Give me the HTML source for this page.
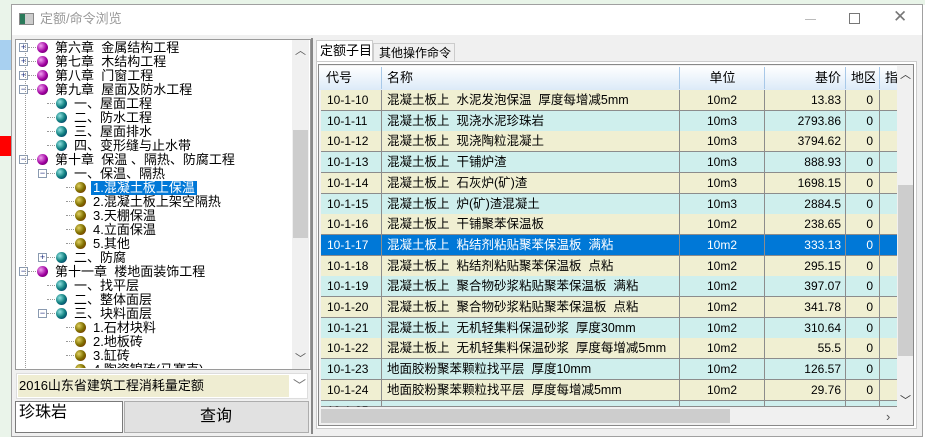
<!DOCTYPE html>
<html><head><meta charset="utf-8"><style>
*{box-sizing:border-box;margin:0;padding:0}
body{width:925px;height:437px;overflow:hidden;background:#fff;font-family:"Liberation Sans","Noto Sans CJK SC",sans-serif;font-size:12px;position:relative}
.a{position:absolute}
.t{position:absolute;white-space:pre;font-size:13px;line-height:14px;color:#000}
.ball{position:absolute;width:11px;height:11px;border-radius:50%}
.p{background:radial-gradient(circle at 35% 35%,#f0a0f0,#a000a0 55%,#500050)}
.g{background:radial-gradient(circle at 35% 35%,#90e0e0,#108080 50%,#002060)}
.o{background:radial-gradient(circle at 35% 35%,#e0d060,#807000 50%,#702000)}
.ex{position:absolute;width:9px;height:9px;border:1px solid #8a9ab0;background:#fff;font-size:9px;line-height:7px;text-align:center;color:#203080}
.row{position:absolute;left:321px;width:576px;height:21px;border-bottom:1px solid #8c8c8c;font-size:12px;line-height:20px}
.row div{position:absolute;top:0;height:20px;border-right:1px solid #8c8c8c;white-space:pre;overflow:hidden}
.y{background:#f0efd2}.c{background:#cfefed}.s{background:#0078d7;color:#fff}
</style></head><body>
<div class="a" style="left:0;top:0;width:925px;height:5px;background:#e8f4e8"></div>
<div class="a" style="left:0;top:0;width:11px;height:437px;background:#eaf4ea"></div>
<div class="a" style="left:0;top:136px;width:11px;height:20px;background:#f00"></div>
<div class="a" style="left:0;top:40px;width:11px;height:30px;background:#a8d0f0"></div>
<div class="a" style="left:11px;top:4px;width:912px;height:433px;background:#f0f0f0;border:1px solid #a0a0a0"></div>
<div class="a" style="left:12px;top:5px;width:910px;height:30px;background:#fff"></div>
<div class="a" style="left:19px;top:13px;width:15px;height:12px;border:1px solid #888;background:linear-gradient(90deg,#2a7a5a 40%,#ccc 40%)"></div>
<div class="t" style="left:40px;top:12px;color:#999;font-size:13px">定额/命令浏览</div>
<div class="a" style="left:805px;top:19px;width:11px;height:1px;background:#bbb"></div>
<div class="a" style="left:849px;top:13px;width:11px;height:11px;border:1px solid #777"></div>
<div class="t" style="left:893px;top:10px;font-size:17px;color:#777">✕</div>
<div class="a" style="left:15px;top:39px;width:296px;height:331px;background:#fff;border:1px solid #9a9a9a;overflow:hidden">
<div class="a" style="left:276px;top:0;width:17px;height:329px;background:#f0f0f0"></div>
<div class="a" style="left:277px;top:90px;width:15px;height:108px;background:#cdcdcd"></div>
<div class="t" style="left:279px;top:4px;font-size:11px;color:#555">︿</div>
<div class="t" style="left:279px;top:312px;font-size:11px;color:#555">﹀</div>
</div>
<div id="tree" class="a" style="left:16px;top:40px;width:275px;height:328px;overflow:hidden"></div>
<div class="a" style="left:16px;top:373px;width:292px;height:26px;background:#fff;border:1px solid #ddd"></div>
<div class="a" style="left:18px;top:375px;width:271px;height:22px;background:#efedd2"></div>
<div class="t" style="left:19px;top:379px;font-size:13px">2016山东省建筑工程消耗量定额</div>
<div class="t" style="left:293px;top:379px;color:#777">﹀</div>
<div class="a" style="left:15px;top:401px;width:108px;height:32px;background:#fff;border:1px solid #7a7a7a"></div>
<div class="t" style="left:19px;top:403px;font-size:16px;line-height:20px">珍珠岩</div>
<div class="a" style="left:124px;top:401px;width:185px;height:32px;background:#e1e1e1;border:1px solid #adadad"></div>
<div class="t" style="left:200px;top:407px;font-size:16px;line-height:20px">查询</div>
<div class="a" style="left:311px;top:38px;width:2px;height:396px;background:#888"></div>
<div class="a" style="left:316px;top:40px;width:57px;height:22px;background:#fff;border:1px solid #ccc;border-bottom:none"></div>
<div class="t" style="left:320px;top:44px">定额子目</div>
<div class="a" style="left:373px;top:43px;width:82px;height:19px;border:1px solid #ccc;border-bottom:none;background:#f0f0f0"></div>
<div class="t" style="left:379px;top:46px;font-size:12px">其他操作命令</div>
<div class="a" style="left:316px;top:61px;width:601px;height:368px;background:#fff;border:1px solid #ccc"></div>
<div class="a" style="left:318px;top:64px;width:596px;height:362px;border:1px solid #888;background:#f0f0f0"></div>
<div class="a" style="left:319px;top:66px;width:578px;height:24px;background:linear-gradient(#fff,#dceaf8)"></div>
<div id="hd"></div>
<div id="rows"></div>
<div class="a" style="left:897px;top:66px;width:16px;height:342px;background:#f0f0f0"></div>
<div class="a" style="left:898px;top:185px;width:15px;height:171px;background:#cdcdcd"></div>
<div class="t" style="left:900px;top:68px;font-size:11px;color:#333">︿</div>
<div class="t" style="left:900px;top:394px;font-size:11px;color:#333">﹀</div>
<div class="a" style="left:321px;top:409px;width:409px;height:14px;background:#cdcdcd"></div>
<div class="t" style="left:886px;top:410px;color:#555">›</div>
<script>
var T=[[0,'+','p','第六章  金属结构工程'],[0,'+','p','第七章  木结构工程'],[0,'+','p','第八章  门窗工程'],[0,'-','p','第九章  屋面及防水工程'],[1,'','g','一、屋面工程'],[1,'','g','二、防水工程'],[1,'','g','三、屋面排水'],[1,'','g','四、变形缝与止水带'],[0,'-','p','第十章  保温 、隔热、防腐工程'],[1,'-','g','一、保温、隔热'],[2,'','o','1.混凝土板上保温'],[2,'','o','2.混凝土板上架空隔热'],[2,'','o','3.天棚保温'],[2,'','o','4.立面保温'],[2,'','o','5.其他'],[1,'+','g','二、防腐'],[0,'-','p','第十一章  楼地面装饰工程'],[1,'','g','一、找平层'],[1,'','g','二、整体面层'],[1,'-','g','三、块料面层'],[2,'','o','1.石材块料'],[2,'','o','2.地板砖'],[2,'','o','3.缸砖'],[2,'','o','4.陶瓷锦砖(马赛克)']];
var h='';
T.forEach(function(r,i){var y=i*14+1,l=r[0];var ix=22+l*19;
h+='<div class="a" style="left:'+(ix-10)+'px;top:'+(y+6)+'px;width:8px;border-top:1px dotted #999"></div>';
if(r[1])h+='<div class="ex" style="left:'+(ix-19)+'px;top:'+(y+2)+'px">'+(r[1]=='+'?'+':'−')+'</div>';
h+='<div class="ball '+r[2]+'" style="left:'+(ix-1)+'px;top:'+(y+1)+'px"></div>';
var sel=i==10;
h+='<div class="t" style="left:'+(ix+15)+'px;top:'+y+'px;padding:0 2px;'+(sel?'background:#0078d7;color:#fff':'')+'">'+r[3]+'</div>';});
h+='<div class="a" style="left:9px;top:0;height:328px;border-left:1px dotted #999"></div>';
document.getElementById('tree').innerHTML=h;
var hd=[[321,61,'代号','left'],[382,298,'名称','left'],[680,85,'单位','center'],[765,81,'基价','right'],[846,34,'地区','center'],[880,30,'指标','left']],s='';
hd.forEach(function(c){s+='<div class="t" style="left:'+(c[0]+5)+'px;top:71px;width:'+(c[1]-10)+'px;text-align:'+c[3]+';overflow:hidden">'+c[2]+'</div><div class="a" style="left:'+(c[0]+c[1]-1)+'px;top:67px;width:1px;height:22px;background:#a8c8e8"></div>';});
document.getElementById('hd').innerHTML=s;
var R=[['10','混凝土板上  水泥发泡保温  厚度每增减5mm','10m2','13.83'],['11','混凝土板上  现浇水泥珍珠岩','10m3','2793.86'],['12','混凝土板上  现浇陶粒混凝土','10m3','3794.62'],['13','混凝土板上  干铺炉渣','10m3','888.93'],['14','混凝土板上  石灰炉(矿)渣','10m3','1698.15'],['15','混凝土板上  炉(矿)渣混凝土','10m3','2884.5'],['16','混凝土板上  干铺聚苯保温板','10m2','238.65'],['17','混凝土板上  粘结剂粘贴聚苯保温板  满粘','10m2','333.13'],['18','混凝土板上  粘结剂粘贴聚苯保温板  点粘','10m2','295.15'],['19','混凝土板上  聚合物砂浆粘贴聚苯保温板  满粘','10m2','397.07'],['20','混凝土板上  聚合物砂浆粘贴聚苯保温板  点粘','10m2','341.78'],['21','混凝土板上  无机轻集料保温砂浆  厚度30mm','10m2','310.64'],['22','混凝土板上  无机轻集料保温砂浆  厚度每增减5mm','10m2','55.5'],['23','地面胶粉聚苯颗粒找平层  厚度10mm','10m2','126.57'],['24','地面胶粉聚苯颗粒找平层  厚度每增减5mm','10m2','29.76'],['25','','','']];
s='';
R.forEach(function(r,i){var y=90+i*20.7;var cl=i==7?'s':(i%2?'c':'y');
s+='<div class="row '+cl+'" style="top:'+y+'px;height:'+(i==15?407-y:21)+'px"><div style="left:0;width:61px;padding-left:6px">10-1-'+r[0]+'</div><div style="left:61px;width:298px;padding-left:5px;font-size:12.5px">'+r[1]+'</div><div style="left:359px;width:85px;text-align:center">'+r[2]+'</div><div style="left:444px;width:81px;text-align:right;padding-right:4px">'+r[3]+'</div><div style="left:525px;width:34px;text-align:right;padding-right:6px">'+(r[2]?'0':'')+'</div></div>';});
var e=document.getElementById('rows');e.innerHTML=s;e.className='a';e.style.cssText='left:0;top:0;width:925px;height:407px;overflow:hidden';
</script>
</body></html>
